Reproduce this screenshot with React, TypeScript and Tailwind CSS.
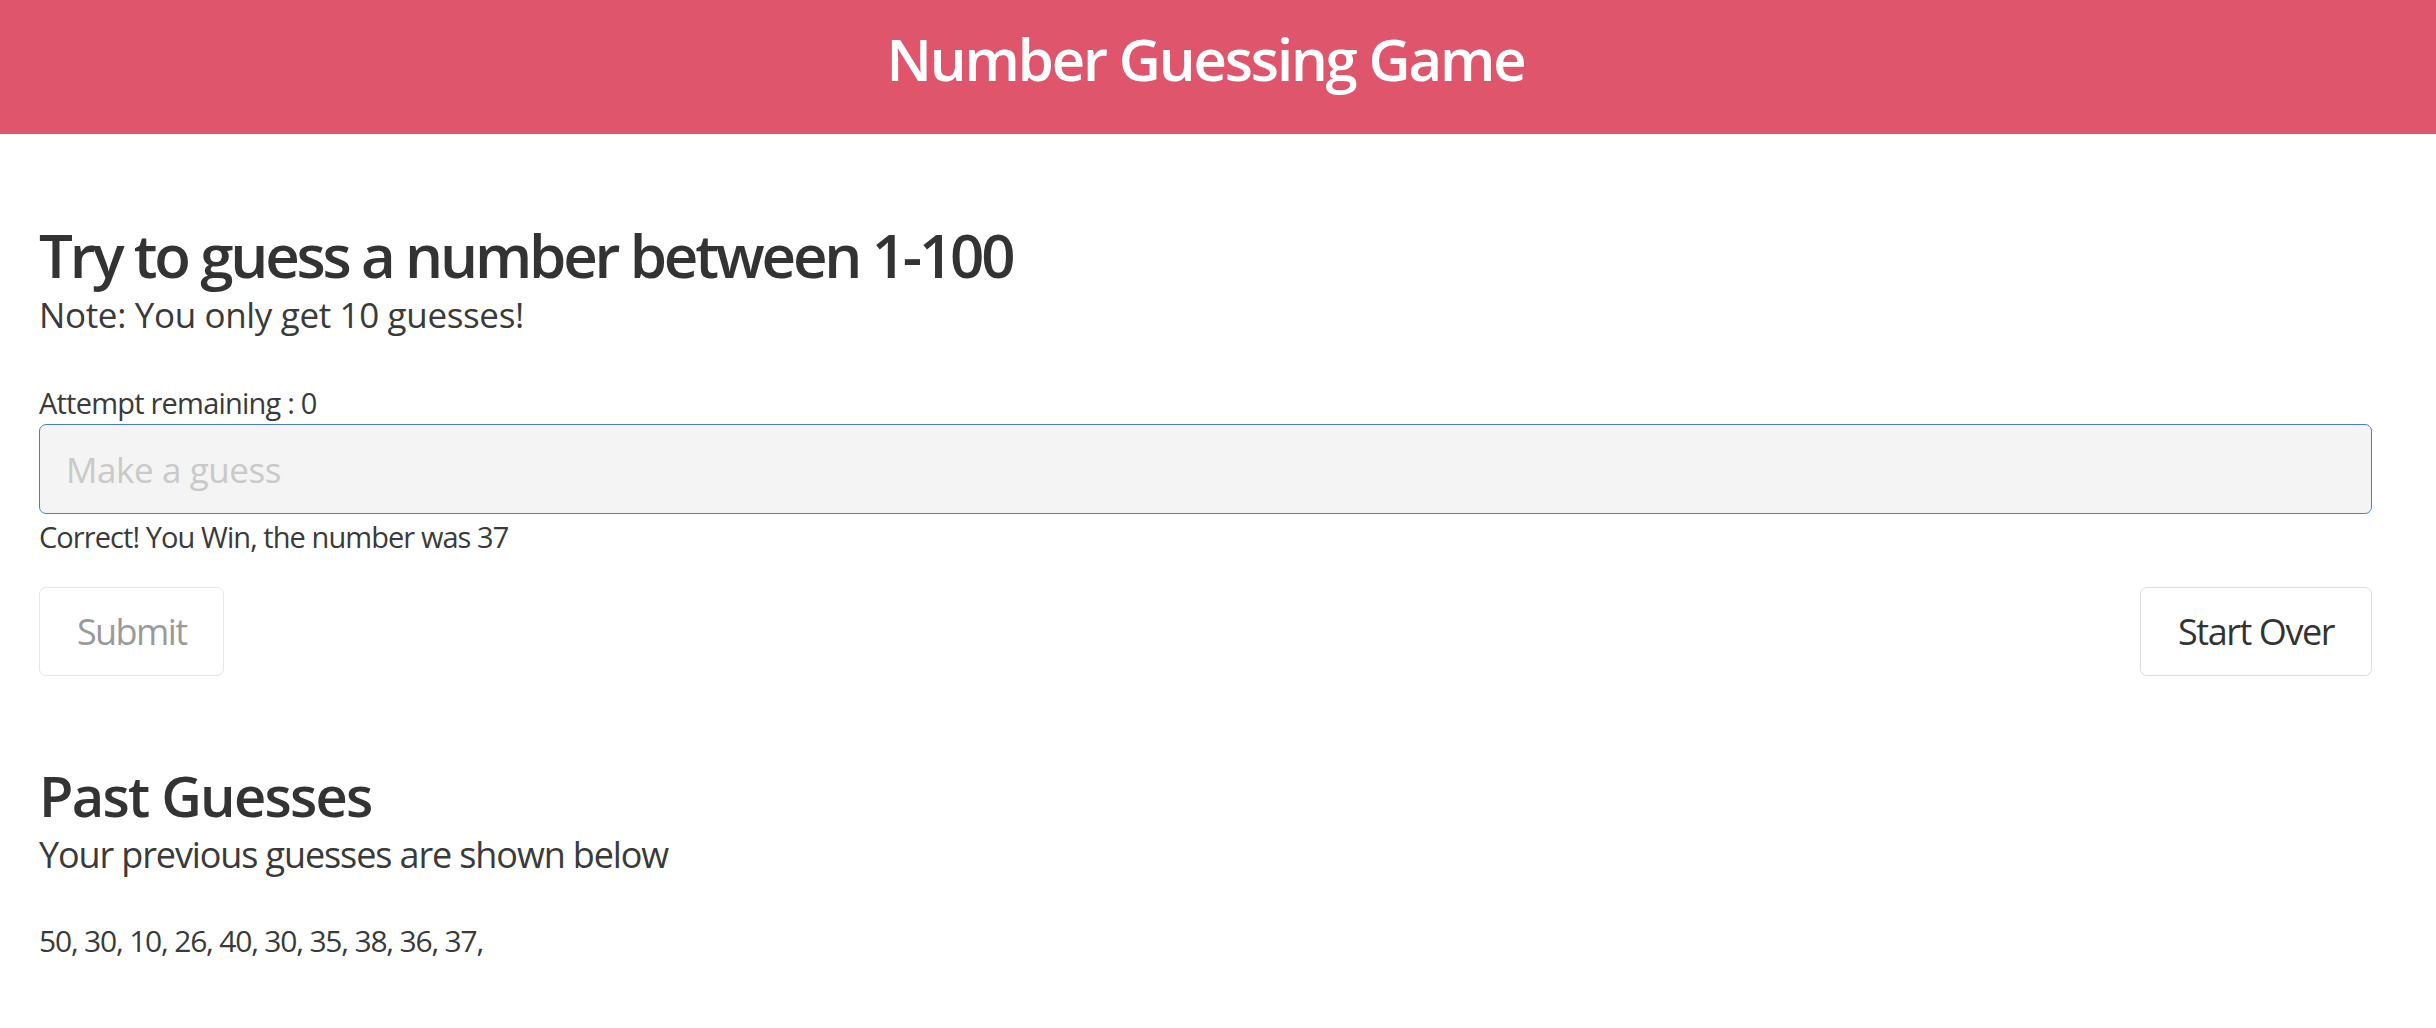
import React from "react";

export default function App() {
  const guesses = [50, 30, 10, 26, 40, 30, 35, 38, 36, 37];
  return (
    <div
      className="min-h-[1028px] w-full bg-white text-[#333333]"
      style={{ fontFamily: '"Open Sans", "Noto Sans", Arial, sans-serif' }}
    >
      <header className="h-[134px] bg-[#df556b] pl-[39px] pr-[64px] pt-[23px]">
        <h1 className="text-center text-[58px] leading-[72px] font-semibold tracking-[-0.037em] text-white">
          Number Guessing Game
        </h1>
      </header>

      <main className="pl-[39px] pr-[64px]">
        <section className="pt-[85px]">
          <h2 className="text-[60px] leading-[72px] font-semibold tracking-[-0.053em] text-[#333333]">
            Try to guess a number between 1-100
          </h2>
          <p className="mt-[4px] text-[35px] leading-[40px] tracking-[-0.01em] text-[#3a3a3a]">
            Note: You only get 10 guesses!
          </p>

          <label className="mt-[50px] block text-[29px] leading-[36px] tracking-[-0.027em] text-[#3a3a3a]">
            Attempt remaining : 0
          </label>
          <input
            disabled
            placeholder="Make a guess"
            className="mt-[3px] block h-[90px] w-full rounded-[7px] border border-[#4a7bd8] bg-[#f4f4f4] px-[26px] text-[35px] tracking-[-0.012em] text-[#333333] placeholder:text-[#c9c9c9] outline-none"
          />
          <p className="mt-[5px] text-[29px] leading-[36px] tracking-[-0.032em] text-[#3a3a3a]">
            Correct! You Win, the number was 37
          </p>

          <div className="mt-[32px] flex items-center justify-between">
            <button
              disabled
              className="h-[89px] rounded-[7px] border border-[#e6e6e6] bg-white px-[37px] text-[36px] tracking-[-0.045em] text-[#9a9a9a]"
            >
              Submit
            </button>
            <button className="h-[89px] rounded-[7px] border border-[#dcdcdc] bg-white px-[37px] text-[36px] tracking-[-0.04em] text-[#333333]">
              Start Over
            </button>
          </div>
        </section>

        <section className="mt-[85px]">
          <h2 className="text-[56px] leading-[68px] font-semibold tracking-[-0.031em] text-[#333333]">
            Past Guesses
          </h2>
          <p className="mt-[4px] text-[36px] leading-[44px] tracking-[-0.031em] text-[#3a3a3a]">
            Your previous guesses are shown below
          </p>
          <p className="mt-[46px] text-[30px] leading-[36px] tracking-[-0.04em] text-[#3a3a3a]">
            {guesses.map((g) => `${g}, `).join("")}
          </p>
        </section>
      </main>
    </div>
  );
}
